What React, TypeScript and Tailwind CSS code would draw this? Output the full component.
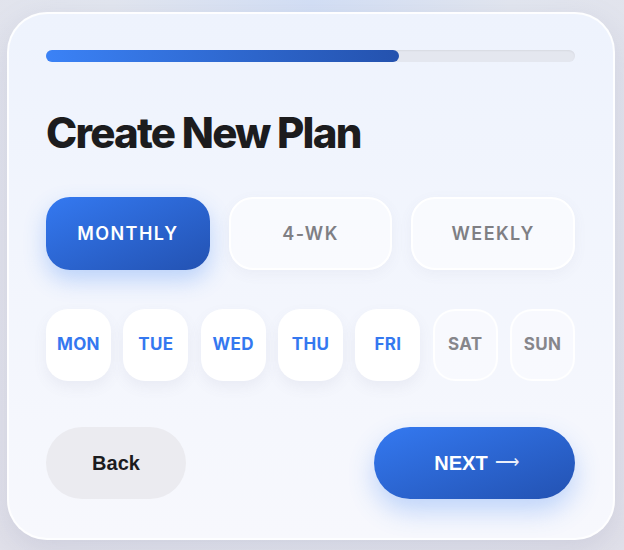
import { useState } from "react";

const plans = ["MONTHLY", "4-WK", "WEEKLY"];

const days = [
  { id: "MON", on: true },
  { id: "TUE", on: true },
  { id: "WED", on: true },
  { id: "THU", on: true },
  { id: "FRI", on: true },
  { id: "SAT", on: false },
  { id: "SUN", on: false },
];

const inter = { fontFamily: "Inter, 'Noto Sans', sans-serif" };
const arial = { fontFamily: "'Liberation Sans', Arial, sans-serif" };

const App = () => {
  const [plan, setPlan] = useState("MONTHLY");

  return (
    <div className="min-h-[550px] w-full bg-[radial-gradient(ellipse_at_50%_0%,#d3dff5_0%,#e2e6ef_45%,#e1e1ea_100%)] pl-[7px] pr-[9px] pt-[12px] pb-[11px]" style={inter}>
      <div className="rounded-[40px] border-2 border-white/90 bg-gradient-to-b from-[#eef3fd] to-[#f7f8fd] pl-[37px] pr-[38px] pt-[36px] pb-[39px] shadow-[0_10px_30px_rgba(120,120,160,0.18)]">
        {/* Progress */}
        <div className="h-3 w-full rounded-full bg-[#e4e7ef] shadow-[inset_0_1px_2px_rgba(0,0,0,0.06)]">
          <div className="h-3 w-2/3 rounded-full bg-gradient-to-r from-[#3b82f6] to-[#2452ae]" />
        </div>

        {/* Title */}
        <h1 className="mt-[50px] text-[42px] leading-none font-extrabold tracking-[-0.042em] text-[#1c1c1e]">
          Create New Plan
        </h1>

        {/* Plan type */}
        <div className="mt-[43px] grid grid-cols-3 gap-[19px]">
          {plans.map((p) =>
            p === plan ? (
              <button
                key={p}
                onClick={() => setPlan(p)}
                className="h-[73px] rounded-[24px] bg-gradient-to-br from-[#3479f1] to-[#2352b2] text-[18px] font-semibold tracking-[0.08em] text-white shadow-[0_10px_22px_rgba(59,130,246,0.3)]"
              >
                {p}
              </button>
            ) : (
              <button
                key={p}
                onClick={() => setPlan(p)}
                className="h-[73px] rounded-[24px] border-2 border-white bg-white/50 text-[18px] font-semibold tracking-[0.08em] text-[#7f7f84] shadow-[0_4px_14px_rgba(100,100,140,0.06)]"
              >
                {p}
              </button>
            )
          )}
        </div>

        {/* Days */}
        <div className="mt-[39px] grid grid-cols-7 gap-[12.5px]">
          {days.map((d) => (
            <button
              key={d.id}
              className={
                d.on
                  ? "h-[72px] rounded-[22px] bg-white text-[17px] font-bold tracking-[0.02em] text-[#3478f0] shadow-[0_6px_14px_rgba(100,100,140,0.08)]"
                  : "h-[72px] rounded-[22px] border-2 border-white/90 bg-white/40 text-[17px] font-bold tracking-[0.02em] text-[#86868b]"
              }
            >
              {d.id}
            </button>
          ))}
        </div>

        {/* Footer */}
        <div className="mt-[46px] flex items-center justify-between">
          <button
            className="h-[72px] w-[140px] rounded-full bg-[#ebebf0] text-[20px] font-bold text-[#1c1c1e]"
            style={arial}
          >
            Back
          </button>
          <button
            className="flex h-[72px] w-[201px] items-center justify-center gap-[7px] rounded-full bg-gradient-to-br from-[#3479f1] to-[#2352b2] pl-[4px] text-[20px] font-bold text-white shadow-[0_12px_26px_rgba(59,130,246,0.3)]"
            style={arial}
          >
            NEXT
            <span className="text-[17px] font-normal text-white/90">⟶</span>
          </button>
        </div>
      </div>
    </div>
  );
};

export default App;
